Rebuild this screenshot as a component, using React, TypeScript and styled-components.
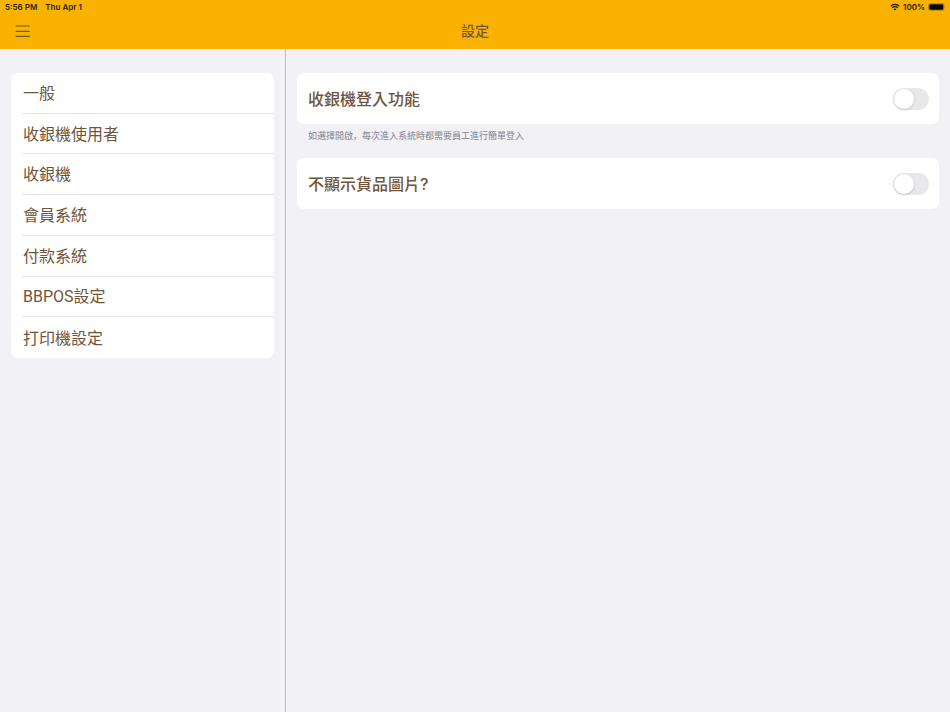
import React, { useState } from "react";
import styled, { createGlobalStyle } from "styled-components";

const GlobalStyle = createGlobalStyle`
  *, *::before, *::after { box-sizing: border-box; }
  body {
    margin: 0;
    background: #f2f1f6;
    color: #6f553c;
    font-family: Inter, "Noto Sans CJK TC", sans-serif;
    font-size: 16px;
  }
  button, input { font: inherit; color: inherit; }
`;

const Page = styled.div`
  display: flex;
  flex-direction: column;
  min-height: 100vh;
`;

const Header = styled.header`
  background: #f9b200;
`;

const StatusBar = styled.div`
  display: flex;
  justify-content: space-between;
  height: 14px;
  padding: 0 4px 0 5px;
  color: #2a2005;
  font-size: 8px;
  font-weight: 600;
  line-height: 14px;
`;

const StatusGroup = styled.div<{ $gap: number }>`
  display: flex;
  align-items: center;
  gap: ${(p) => p.$gap}px;
`;

const NavBar = styled.div`
  display: grid;
  grid-template-columns: 1fr auto 1fr;
  align-items: center;
  height: 35px;
  padding: 0 13px 1px;
`;

const MenuButton = styled.button`
  display: flex;
  justify-self: start;
  padding: 2px;
  border: 0;
  background: none;
  cursor: pointer;
`;

const Title = styled.h1`
  margin: 0;
  font-size: 14px;
  font-weight: 500;
  line-height: 20px;
`;

const Body = styled.div`
  display: grid;
  grid-template-columns: 286px 1fr;
  flex: 1;
`;

const Sidebar = styled.nav`
  padding: 24px 11px;
  border-right: 1px solid #bebdc3;
`;

const Card = styled.div`
  border-radius: 7px;
  background: #fff;
`;

const MenuList = styled.ul`
  display: grid;
  grid-auto-rows: 1fr;
  min-height: 285px;
  margin: 0;
  padding: 0 0 0 11px;
  border-radius: 7px;
  background: #fff;
  list-style: none;
`;

const MenuItem = styled.li`
  display: flex;
  border-bottom: 1px solid #e6e6e8;

  &:last-child {
    border-bottom: 0;
  }
`;

const MenuItemButton = styled.button`
  flex: 1;
  padding: 2px 1px 0;
  border: 0;
  background: none;
  font-family: Roboto, "Noto Sans CJK TC", sans-serif;
  line-height: 24px;
  text-align: left;
  cursor: pointer;
`;

const Content = styled.main`
  padding: 24px 11px;
`;

const SettingRow = styled(Card)`
  display: flex;
  align-items: center;
  justify-content: space-between;
  min-height: 51px;
  padding: 0 10px 0 11px;
`;

const SettingLabel = styled.label`
  font-weight: 500;
  line-height: 24px;
`;

const Hint = styled.p`
  margin: 0;
  padding: 5px 11px 15px;
  color: #85848a;
  font-family: "Noto Sans CJK SC", sans-serif;
  font-size: 9px;
  line-height: 14px;
`;

const Switch = styled.input`
  display: flex;
  align-items: center;
  width: 36px;
  height: 22px;
  margin: 0;
  padding: 1px;
  border-radius: 11px;
  background: #e8e8ea;
  appearance: none;
  cursor: pointer;

  &::before {
    content: "";
    width: 20px;
    height: 20px;
    border-radius: 50%;
    background: #fff;
    box-shadow: 0 1px 3px rgba(0, 0, 0, 0.16);
  }

  &:checked {
    justify-content: flex-end;
    background: #34c759;
  }
`;

const MenuIcon = () => (
  <svg width="16" height="16" viewBox="0 0 16 16" aria-hidden="true">
    <path d="M1.2 3H14.2M1.2 8.3H14.2M1.2 13.4H14.2" stroke="#6f553c" strokeWidth="1.2" strokeLinecap="round" />
  </svg>
);

const WifiIcon = () => (
  <svg width="10" height="8" viewBox="0 0 10 8" aria-hidden="true" fill="none" stroke="#1d1603">
    <path d="M0.7 3.1C3.1 0.7 6.9 0.7 9.3 3.1" strokeWidth="1.3" />
    <path d="M2.3 4.8C3.8 3.3 6.2 3.3 7.7 4.8" strokeWidth="1.3" />
    <path d="M5 7.6L3.5 6.1Q5 4.8 6.5 6.1Z" fill="#1d1603" stroke="none" />
  </svg>
);

const BatteryIcon = () => (
  <svg width="18" height="8" viewBox="0 0 18 8" aria-hidden="true">
    <rect x="0.5" y="0.4" width="15.5" height="7.2" rx="2" fill="none" stroke="#a87a08" strokeWidth="0.7" />
    <rect x="1.3" y="1.2" width="14" height="5.6" rx="1.2" fill="#000" />
    <path d="M16.7 2.8Q18 4 16.7 5.2Z" fill="#a87a08" />
  </svg>
);

const sections = ["一般", "收銀機使用者", "收銀機", "會員系統", "付款系統", "BBPOS設定", "打印機設定"];

const settings = [
  {
    id: "register-login",
    label: "收銀機登入功能",
    hint: "如選擇開啟，每次進入系統時都需要員工進行簡單登入",
  },
  { id: "hide-images", label: "不顯示貨品圖片?" },
];

export default function App() {
  const [enabled, setEnabled] = useState<Record<string, boolean>>({});

  return (
    <Page lang="zh-Hant">
      <GlobalStyle />
      <Header>
        <StatusBar>
          <StatusGroup $gap={8}>
            <span>5:56 PM</span>
            <span>Thu Apr 1</span>
          </StatusGroup>
          <StatusGroup $gap={3}>
            <WifiIcon />
            <span>100%</span>
            <BatteryIcon />
          </StatusGroup>
        </StatusBar>
        <NavBar>
          <MenuButton type="button" aria-label="選單">
            <MenuIcon />
          </MenuButton>
          <Title>設定</Title>
        </NavBar>
      </Header>
      <Body>
        <Sidebar>
          <MenuList>
            {sections.map((name) => (
              <MenuItem key={name}>
                <MenuItemButton type="button">{name}</MenuItemButton>
              </MenuItem>
            ))}
          </MenuList>
        </Sidebar>
        <Content>
          {settings.map(({ id, label, hint }) => (
            <React.Fragment key={id}>
              <SettingRow>
                <SettingLabel htmlFor={id}>{label}</SettingLabel>
                <Switch
                  id={id}
                  type="checkbox"
                  role="switch"
                  checked={!!enabled[id]}
                  onChange={(e) => setEnabled({ ...enabled, [id]: e.target.checked })}
                />
              </SettingRow>
              {hint && <Hint lang="zh-Hans">{hint}</Hint>}
            </React.Fragment>
          ))}
        </Content>
      </Body>
    </Page>
  );
}
